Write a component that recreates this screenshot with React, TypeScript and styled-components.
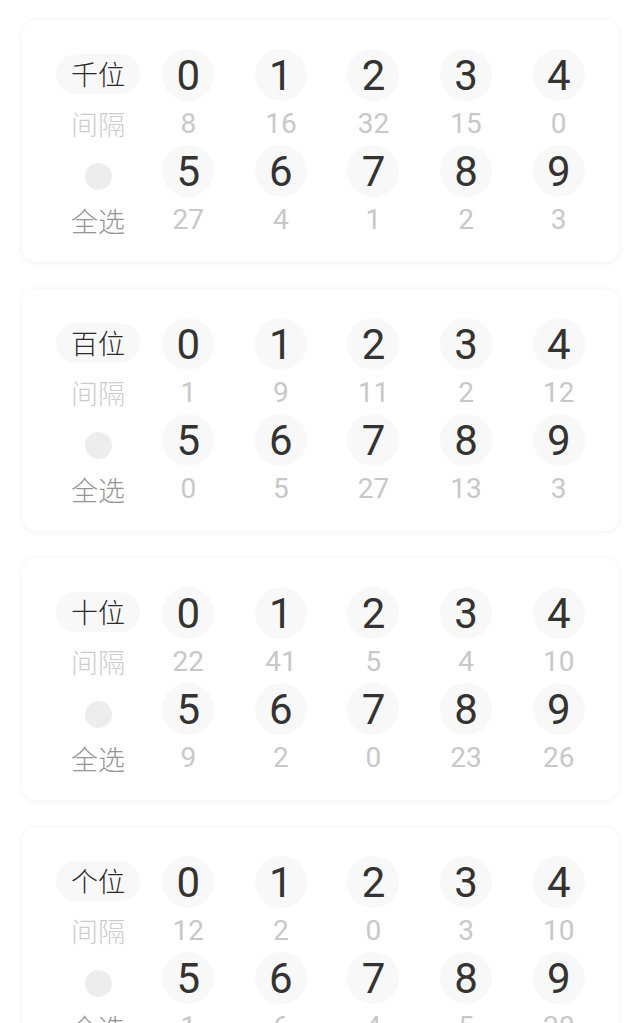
import React from 'react';
import styled, { createGlobalStyle } from 'styled-components';

const NUM_FONT = 'Roboto, "Noto Sans", sans-serif';
const CJK_FONT = '"Noto Sans CJK SC", "Noto Sans", sans-serif';

const GlobalStyle = createGlobalStyle`
  html, body {
    margin: 0;
    padding: 0;
    background: #ffffff;
  }
`;

const Page = styled.div`
  display: flex;
  flex-direction: column;
  gap: 27px;
  padding: 20px 22px 40px;
`;

const Card = styled.section`
  height: 242px;
  box-sizing: border-box;
  padding: 29px 14px 0 32px;
  background: #ffffff;
  border-radius: 14px;
  box-shadow: 0 1px 7px rgba(0, 0, 0, 0.06), 0 0 1px rgba(0, 0, 0, 0.04);
  display: grid;
  grid-template-columns: 88px repeat(5, 1fr);
  grid-auto-rows: 96px;
`;

const LabelCell = styled.div<{ $shift?: number }>`
  display: flex;
  flex-direction: column;
  align-items: center;
  padding-top: ${(p) => p.$shift ?? 0}px;
`;

const Slot = styled.div`
  height: 52px;
  display: flex;
  align-items: center;
  justify-content: center;
`;

const Pill = styled.div`
  height: 40px;
  width: 84px;
  border-radius: 20px;
  background: #f8f8f8;
  display: flex;
  align-items: center;
  justify-content: center;
  font-family: ${CJK_FONT};
  font-size: 27px;
  font-weight: 300;
  color: #2a2a2a;
  margin-top: -3px;
`;

const Dot = styled.div`
  width: 27px;
  height: 27px;
  border-radius: 50%;
  background: #ededed;
`;

const SubLabel = styled.div<{ $tone: 'light' | 'mid' }>`
  height: 44px;
  display: flex;
  align-items: center;
  justify-content: center;
  font-family: ${CJK_FONT};
  font-size: 27px;
  font-weight: 300;
  color: ${(p) => (p.$tone === 'light' ? '#cccccc' : '#959595')};
`;

const DigitCell = styled.div`
  display: flex;
  flex-direction: column;
  align-items: center;
`;

const Ball = styled.div`
  width: 52px;
  height: 52px;
  border-radius: 50%;
  background: #f8f8f8;
  display: flex;
  align-items: center;
  justify-content: center;
  font-family: ${NUM_FONT};
  font-size: 42px;
  color: #333333;
`;

const Gap = styled.div`
  height: 44px;
  display: flex;
  align-items: center;
  justify-content: center;
  font-family: ${NUM_FONT};
  font-size: 28px;
  color: #c8c8c8;
`;

type Section = { name: string; gaps: number[] };

const sections: Section[] = [
  { name: '千位', gaps: [8, 16, 32, 15, 0, 27, 4, 1, 2, 3] },
  { name: '百位', gaps: [1, 9, 11, 2, 12, 0, 5, 27, 13, 3] },
  { name: '十位', gaps: [22, 41, 5, 4, 10, 9, 2, 0, 23, 26] },
  { name: '个位', gaps: [12, 2, 0, 3, 10, 1, 6, 4, 5, 20] },
];

const DigitBlock: React.FC<{ digit: number; gap: number }> = ({ digit, gap }) => (
  <DigitCell>
    <Ball>{digit}</Ball>
    <Gap>{gap}</Gap>
  </DigitCell>
);

const PositionCard: React.FC<{ section: Section }> = ({ section }) => {
  const top = [0, 1, 2, 3, 4];
  const bottom = [5, 6, 7, 8, 9];
  return (
    <Card>
      <LabelCell>
        <Slot>
          <Pill>{section.name}</Pill>
        </Slot>
        <SubLabel $tone="light">间隔</SubLabel>
      </LabelCell>
      {top.map((d) => (
        <DigitBlock key={d} digit={d} gap={section.gaps[d]} />
      ))}
      <LabelCell $shift={8}>
        <Slot>
          <Dot />
        </Slot>
        <SubLabel $tone="mid">全选</SubLabel>
      </LabelCell>
      {bottom.map((d) => (
        <DigitBlock key={d} digit={d} gap={section.gaps[d]} />
      ))}
    </Card>
  );
};

export default function App() {
  return (
    <>
      <GlobalStyle />
      <Page>
        {sections.map((s) => (
          <PositionCard key={s.name} section={s} />
        ))}
      </Page>
    </>
  );
}
